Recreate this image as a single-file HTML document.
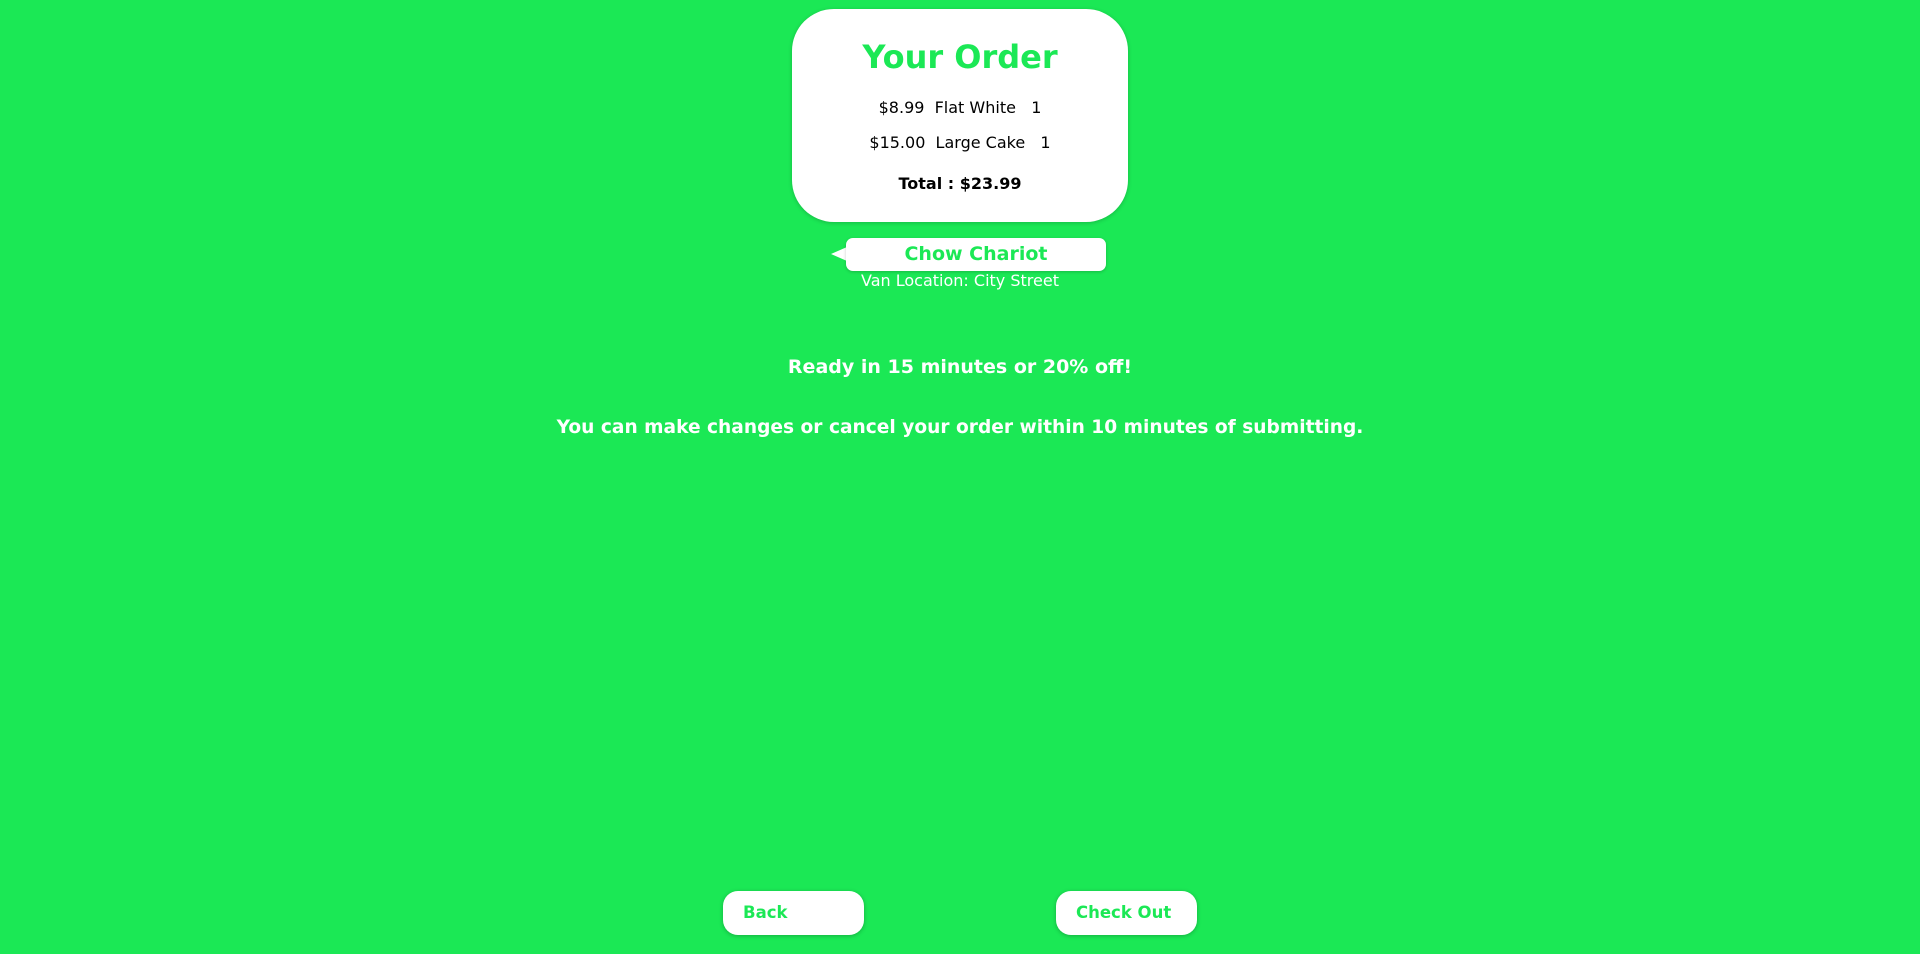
<!DOCTYPE html>
<html><head><meta charset="utf-8"><style>
html,body{margin:0;padding:0;width:1920px;height:954px;background:#1be855;font-family:"DejaVu Sans","Liberation Sans",sans-serif;overflow:hidden;position:relative}
.card{position:absolute;left:792px;top:9px;width:336px;height:213px;background:#fff;border-radius:42px;box-shadow:0 1px 4px rgba(0,0,0,.2);text-align:center}
.card h1{margin:0;position:absolute;top:29px;width:100%;font-size:32px;color:#1be855;font-weight:bold}
.row{position:absolute;width:100%;font-size:16px;color:#000}
.pill{position:absolute;left:846px;top:238px;width:260px;height:33px;background:#fff;border-radius:7px;text-align:center;color:#1be855;font-weight:bold;font-size:19px;line-height:33px;box-shadow:0 1px 3px rgba(0,0,0,.2)}
.tri{position:absolute;left:831px;top:247px;width:0;height:0;border-top:7px solid transparent;border-bottom:7px solid transparent;border-right:16px solid #fff}
.t{position:absolute;width:1920px;text-align:center;color:#fff}
.btn{position:absolute;top:891px;width:141px;height:44px;background:#fff;border-radius:15px;color:#1be855;font-weight:bold;font-size:16.5px;line-height:44px;box-sizing:border-box;padding-left:20px;box-shadow:0 1px 4px rgba(0,0,0,.25)}
</style></head><body>
<div class="card">
<h1>Your Order</h1>
<div class="row" style="top:89px">$8.99&nbsp;&nbsp;Flat White&nbsp;&nbsp;&nbsp;1</div>
<div class="row" style="top:124px">$15.00&nbsp;&nbsp;Large Cake&nbsp;&nbsp;&nbsp;1</div>
<div class="row" style="top:165px;font-weight:bold">Total : $23.99</div>
</div>
<div class="tri"></div>
<div class="pill">Chow Chariot</div>
<div class="t" style="top:271px;font-size:16px">Van Location: City Street</div>
<div class="t" style="top:356px;font-size:19px;font-weight:bold">Ready in 15 minutes or 20% off!</div>
<div class="t" style="top:417px;font-size:18.6px;font-weight:bold">You can make changes or cancel your order within 10 minutes of submitting.</div>
<div class="btn" style="left:723px">Back</div>
<div class="btn" style="left:1056px">Check Out</div>
</body></html>
